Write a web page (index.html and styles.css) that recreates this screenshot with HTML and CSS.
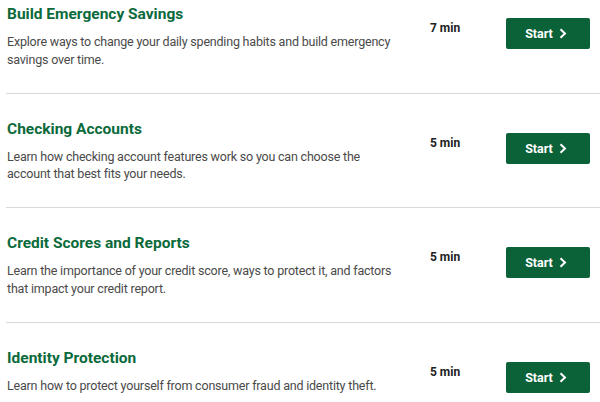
FILE: index.html
```html
<!DOCTYPE html>
<html lang="en">
<head>
  <meta charset="UTF-8">
  <title>Financial Lessons</title>
  <meta name="viewport" content="width=device-width, initial-scale=1.0">
  <link rel="stylesheet" href="styles.css">
</head>
<body>

  <main class="lessons">
    <div class="lesson">
      <div class="info">
        <h2>Build Emergency Savings</h2>
        <p>Explore ways to change your daily spending habits and build emergency savings over time.</p>
      </div>
      <div class="time">7 min</div>
      <a class="start" href="#">Start
        <svg width="8" height="11" viewBox="0 0 8 11"><path d="M1.5 1.2 L6 5.5 L1.5 9.8" fill="none" stroke="#fff" stroke-width="2"/></svg>
      </a>
    </div>

    <div class="lesson">
      <div class="info">
        <h2>Checking Accounts</h2>
        <p>Learn how checking account features work so you can choose the account that best fits your needs.</p>
      </div>
      <div class="time">5 min</div>
      <a class="start" href="#">Start
        <svg width="8" height="11" viewBox="0 0 8 11"><path d="M1.5 1.2 L6 5.5 L1.5 9.8" fill="none" stroke="#fff" stroke-width="2"/></svg>
      </a>
    </div>

    <div class="lesson">
      <div class="info">
        <h2>Credit Scores and Reports</h2>
        <p>Learn the importance of your credit score, ways to protect it, and factors that impact your credit report.</p>
      </div>
      <div class="time">5 min</div>
      <a class="start" href="#">Start
        <svg width="8" height="11" viewBox="0 0 8 11"><path d="M1.5 1.2 L6 5.5 L1.5 9.8" fill="none" stroke="#fff" stroke-width="2"/></svg>
      </a>
    </div>

    <div class="lesson">
      <div class="info">
        <h2>Identity Protection</h2>
        <p>Learn how to protect yourself from consumer fraud and identity theft.</p>
      </div>
      <div class="time">5 min</div>
      <a class="start" href="#">Start
        <svg width="8" height="11" viewBox="0 0 8 11"><path d="M1.5 1.2 L6 5.5 L1.5 9.8" fill="none" stroke="#fff" stroke-width="2"/></svg>
      </a>
    </div>
  </main>

</body>
</html>
```

FILE: styles.css
```css
:root {
  --green: #0b6a3b;
  --btn: #0b6239;
  --text: #4a4a4a;
  --line: #d9d9d9;
}

body {
  margin: 0;
  font-family: Roboto, 'Liberation Sans', sans-serif;
  background: #fff;
  overflow: hidden;
}

.lessons {
  margin-left: 6px;
}

.lesson {
  display: flex;
  align-items: flex-start;
  padding: 25px 10px 24.5px 1px;
  border-bottom: 1px solid var(--line);
}

.lesson:first-child {
  padding-top: 4px;
}

.info {
  flex: 0 0 395px;
}

.info h2 {
  margin: 0 0 9px;
  font-size: 15.5px;
  line-height: 20px;
  font-weight: 700;
  color: var(--green);
}

.info p {
  margin: 0;
  font-size: 12.5px;
  line-height: 17.5px;
  letter-spacing: -0.2px;
  color: var(--text);
}

.time {
  flex: 0 0 76px;
  margin-left: 28px;
  margin-top: 16px;
  font-size: 12px;
  line-height: 17px;
  font-weight: 700;
  color: #222;
}

.start {
  flex: 0 0 84px;
  height: 31px;
  margin-top: 14px;
  display: flex;
  align-items: center;
  justify-content: center;
  gap: 6px;
  padding-right: 4px;
  box-sizing: border-box;
  background: var(--btn);
  border-radius: 2px;
  color: #fff;
  font-size: 12.5px;
  font-weight: 700;
  text-decoration: none;
}
```
